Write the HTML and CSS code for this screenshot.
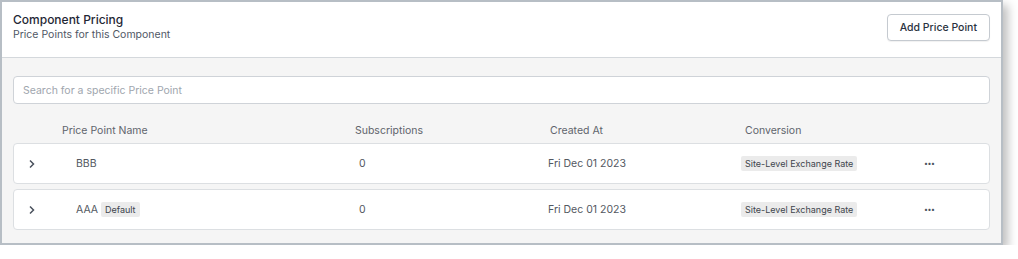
FILE: index.html
```html
<!DOCTYPE html>
<html lang="en">
    <head>
        <meta charset="UTF-8">
        <title>Component Pricing</title>
        <link rel="stylesheet" href="styles.css">
    </head>
    <body>
        <div class="card">
            <div class="card-head">
                <div>
                    <h1>Component Pricing</h1>
                    <p>Price Points for this Component</p>
                </div>
                <button class="btn">Add Price Point</button>
            </div>
            <div class="card-body">
                <input class="search" type="text" placeholder="Search for a specific Price Point">
                <div class="cols">
                    <span class="c-sp"></span>
                    <span class="c-name">Price Point Name</span>
                    <span class="c-subs">Subscriptions</span>
                    <span class="c-date">Created At</span>
                    <span class="c-conv">Conversion</span>
                </div>
                <div class="row">
                    <span class="r-chev"><svg width="8" height="10" viewBox="0 0 8 10"><path d="M2 1.5 L5.5 5 L2 8.5" fill="none" stroke="#4a515d" stroke-width="1.5"/></svg></span>
                    <span class="r-name">BBB</span>
                    <span class="r-subs">0</span>
                    <span class="r-date">Fri Dec 01 2023</span>
                    <span class="r-conv"><span class="tag">Site-Level Exchange Rate</span></span>
                    <span class="r-act">&bull;&bull;&bull;</span>
                </div>
                <div class="row">
                    <span class="r-chev"><svg width="8" height="10" viewBox="0 0 8 10"><path d="M2 1.5 L5.5 5 L2 8.5" fill="none" stroke="#4a515d" stroke-width="1.5"/></svg></span>
                    <span class="r-name">AAA <span class="tag">Default</span></span>
                    <span class="r-subs">0</span>
                    <span class="r-date">Fri Dec 01 2023</span>
                    <span class="r-conv"><span class="tag">Site-Level Exchange Rate</span></span>
                    <span class="r-act">&bull;&bull;&bull;</span>
                </div>
            </div>
        </div>
    </body>
</html>
```

FILE: styles.css
```css
body{
    margin: 0;
    background-color: white;
    font-family: Inter, "Liberation Sans", sans-serif;
}
.card{
    width: 999px;
    border: 2px solid #b7bec5;
    box-shadow: 5px 5px 9px rgba(0,0,0,0.25);
    background-color: #f5f5f5;
}
.card-head{
    display: flex;
    justify-content: space-between;
    align-items: flex-start;
    background-color: white;
    padding: 10px 11px 0 11px;
    height: 45px;
    border-bottom: 1px solid #d4d8dc;
}
h1{
    margin: 0;
    font-size: 12px;
    font-weight: 500;
    color: #1f2735;
    line-height: 16px;
}
.card-head p{
    margin: 0;
    font-size: 10.5px;
    color: #505765;
    line-height: 14px;
}
.btn{
    margin-top: 2px;
    height: 27px;
    padding: 0 12px;
    background-color: white;
    border: 1px solid #c5cad0;
    border-radius: 4px;
    font-family: Inter, "Liberation Sans", sans-serif;
    font-size: 10.5px;
    font-weight: 500;
    color: #2a3240;
    box-shadow: 0 1px 1px rgba(0,0,0,0.06);
}
.card-body{
    padding: 18px 11px 13px 11px;
}
.search{
    display: block;
    box-sizing: border-box;
    width: 100%;
    height: 28px;
    padding: 0 9px;
    border: 1px solid #cfd3d8;
    border-radius: 4px;
    font-family: Inter, "Liberation Sans", sans-serif;
    font-size: 10.5px;
    color: #333;
    background-color: white;
}
.search::placeholder{
    color: #a0a6ae;
}
.cols{
    display: flex;
    font-size: 10.5px;
    color: #5f646c;
    height: 39px;
    align-items: flex-end;
    padding-bottom: 6px;
    box-sizing: border-box;
}
.c-sp{ width: 49px; }
.c-name{ width: 293px; }
.c-subs{ width: 195px; }
.c-date{ width: 195px; }
.row{
    display: flex;
    align-items: center;
    height: 39px;
    background-color: white;
    border: 1px solid #dcdfe2;
    border-radius: 4px;
    margin-bottom: 5px;
    font-size: 10.5px;
    color: #535861;
}
.row:last-child{
    margin-bottom: 0;
}
.r-chev{
    width: 62px;
    padding-left: 14px;
    box-sizing: border-box;
    display: flex;
    align-items: center;
}
.r-name{ width: 283px; }
.r-subs{ width: 189px; }
.r-date{ width: 193px; }
.r-conv{ width: 159px; }
.r-act{
    padding-left: 24px;
    font-size: 7px;
    letter-spacing: -0.5px;
    color: #4a515d;
}
.tag{
    display: inline-block;
    background-color: #ebebeb;
    border-radius: 2px;
    padding: 2px 4px;
    font-size: 9px;
    color: #40454d;
    line-height: 11px;
}
```
